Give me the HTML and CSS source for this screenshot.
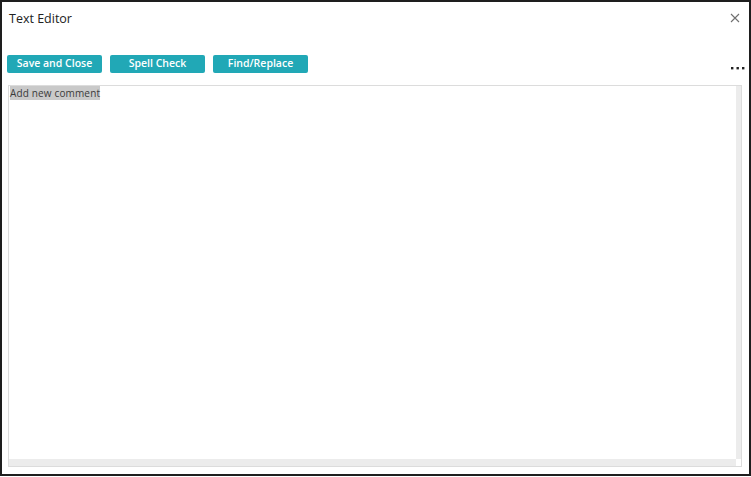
FILE: index.html
```html
<!DOCTYPE html>
<html lang="en">
<head>
    <meta charset="UTF-8">
    <title>Text Editor</title>
    <link rel="stylesheet" href="styles.css">
</head>
<body>
    <div class="dialog">
        <!-- Title bar -->
        <div class="dialog-header">
            <span class="dialog-title">Text Editor</span>
            <svg class="close-icon" width="10" height="10" viewBox="0 0 10 10">
                <path d="M1 1 L9 9 M9 1 L1 9" stroke="#707070" stroke-width="1.1" fill="none"/>
            </svg>
        </div>

        <!-- Toolbar -->
        <div class="toolbar">
            <button class="tool-btn">Save and Close</button>
            <button class="tool-btn">Spell Check</button>
            <button class="tool-btn">Find/Replace</button>
            <svg class="more-icon" width="14" height="4" viewBox="0 0 14 4">
                <rect x="0" y="1" width="2.4" height="2.4" fill="#222"/>
                <rect x="5.5" y="1" width="2.4" height="2.4" fill="#222"/>
                <rect x="11" y="1" width="2.4" height="2.4" fill="#222"/>
            </svg>
        </div>

        <!-- Editor area -->
        <div class="editor">
            <div class="editor-content">
                <span class="placeholder">Add new comment</span>
            </div>
            <div class="scroll-v"></div>
            <div class="scroll-h"></div>
            <div class="scroll-corner"></div>
        </div>
    </div>
</body>
</html>
```

FILE: styles.css
```css
/* Reset */
body {
    margin: 0;
    padding: 0;
    background-color: #fff;
    font-family: "Open Sans", Arial, sans-serif;
    color: #333;
}

/* Window frame */
.dialog {
    box-sizing: border-box;
    width: 751px;
    height: 476px;
    border: 2px solid #1e1e1e;
    display: flex;
    flex-direction: column;
    padding: 0 7px 7px 6px;
}

.dialog-header {
    display: flex;
    align-items: center;
    justify-content: space-between;
    height: 18px;
    margin-top: 7px;
    padding-left: 1px;
}

.dialog-title {
    font-size: 12.5px;
    color: #222;
}

.close-icon {
    margin-right: 2px;
}

/* Toolbar */
.toolbar {
    display: flex;
    align-items: center;
    gap: 8px;
    margin-top: 28px;
}

.tool-btn {
    width: 95px;
    height: 18px;
    padding: 0 0 2px 0;
    border: none;
    border-radius: 2px;
    background-color: #21a8b6;
    color: #fff;
    font-family: "Open Sans", Arial, sans-serif;
    font-size: 10.5px;
    font-weight: 600;
    line-height: 16px;
    cursor: pointer;
}

.tool-btn:first-child {
    margin-left: -1px;
}

.more-icon {
    margin-left: auto;
    margin-top: 8px;
    margin-right: -3px;
}

/* Editor */
.editor {
    flex: 1;
    margin-top: 12px;
    border: 1px solid #dcdcdc;
    display: grid;
    grid-template-columns: 1fr 5px;
    grid-template-rows: 1fr 7px;
}

.scroll-v,
.scroll-h {
    background-color: #ececec;
}

.scroll-corner {
    background-color: #fff;
}

.editor-content {
    padding: 2px 1px;
    font-size: 10px;
    line-height: 11px;
    letter-spacing: 0.15px;
}

.placeholder {
    background-color: #c9c9c9;
    color: #3a3a3a;
}
```
